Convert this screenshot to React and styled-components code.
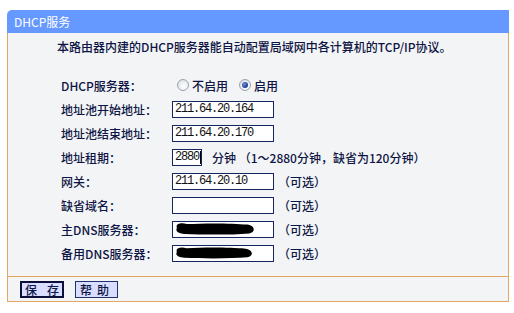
import React from "react";
import styled, { createGlobalStyle } from "styled-components";

const Global = createGlobalStyle`
  html, body { margin: 0; padding: 0; background: #ffffff; }
  body { font-family: "Noto Sans CJK SC", "Noto Sans", sans-serif; font-size: 12px; color: #0e1544; font-weight: 500; }
`;

const ORANGE = "#e3a763";

const Panel = styled.div`
  width: 502px;
  margin: 10px 0 0 7px;
`;

const Header = styled.div`
  height: 23px;
  line-height: 23px;
  background: #6699ff;
  color: #ffffff;
  font-size: 12px;
  font-weight: 400;
  padding-left: 7px;
  border-top-left-radius: 5px;
`;

const Body = styled.div`
  background: #f3f4f6;
  border: 1px solid ${ORANGE};
  border-top: none;
  padding-bottom: 11px;
`;

const Intro = styled.div`
  height: 40px;
  box-sizing: border-box;
  padding: 6px 0 0 49px;
  line-height: 16px;
  font-size: 12px;
`;

const Form = styled.div`
  display: grid;
  grid-template-columns: 111px 1fr;
  grid-auto-rows: 24px;
  padding-left: 53px;
`;

const Label = styled.div`
  display: flex;
  align-items: center;
  font-size: 12px;
`;

const Value = styled.div`
  display: flex;
  align-items: center;
  gap: ${(p) => p.$gap ?? 4}px;
  font-size: 12px;
`;

const RadioGroup = styled.div`
  display: flex;
  align-items: center;
  padding-left: 5px;
  gap: 11px;
`;

const RadioOption = styled.label`
  display: flex;
  align-items: center;
  gap: 3px;
`;

const Radio = styled.input.attrs({ type: "radio" })`
  appearance: none;
  margin: 0;
  width: 12px;
  height: 12px;
  border-radius: 50%;
  border: 1px solid #9aa3b0;
  box-sizing: border-box;
  background: radial-gradient(circle at 60% 65%, #ffffff 0%, #e4e6ea 70%, #cfd3da 100%);
  position: relative;
  &:checked::after {
    content: "";
    position: absolute;
    left: 2px;
    top: 2px;
    width: 6px;
    height: 6px;
    border-radius: 50%;
    background: radial-gradient(circle at 35% 35%, #6f8fe0 0%, #1d3a93 70%);
  }
`;

const FieldWrap = styled.div`
  position: relative;
  display: flex;
`;

const Field = styled.input`
  box-sizing: border-box;
  width: ${(p) => p.$w}px;
  height: 17px;
  margin: 0;
  padding: 0 0 0 2px;
  border: 1px solid #16255e;
  background: #ffffff;
  font-family: "Liberation Mono", "DejaVu Sans Mono", monospace;
  font-size: 12px;
  letter-spacing: -1.2px;
  color: #101010;
  outline: none;
`;

const Caret = styled.span`
  position: absolute;
  left: 28px;
  top: 2px;
  width: 1px;
  height: 13px;
  background: #000000;
`;

const Blob = styled.svg`
  position: absolute;
  left: 3px;
  top: 1px;
`;

const Hint = styled.span`
  white-space: pre;
`;

const Footer = styled.div`
  display: flex;
  align-items: flex-start;
  gap: 11px;
  height: 25px;
  box-sizing: border-box;
  padding: 4px 0 0 12px;
  background: #f3f4f6;
  border: 1px solid ${ORANGE};
  border-top: none;
`;

const Button = styled.button`
  box-sizing: border-box;
  height: 17px;
  width: ${(p) => p.$w}px;
  margin: 0;
  padding: 0 0 0 ${(p) => p.$pad}px;
  text-align: left;
  background: #d9ddff;
  border: ${(p) => (p.$focus ? "2px solid #0b0f3a" : "1px solid #23306e")};
  font-family: "Noto Sans CJK SC", sans-serif;
  font-size: 12px;
  font-weight: 500;
  line-height: 13px;
  color: #0e1544;
  letter-spacing: ${(p) => p.$ls}px;
  white-space: nowrap;
`;

const BlobShape = ({ w }) => (
  <Blob width={w} height="14" viewBox="0 0 84 14">
    <path
      d="M2 6 C0 2 6 0 12 2 C30 1 58 1 74 2.5 C82 3.5 83 10 76 11.5 C58 13 30 13 10 12 C3 11.5 0 9 2 6 Z"
      fill="#000"
    />
  </Blob>
);

export default function App() {
  return (
    <>
      <Global />
      <Panel>
        <Header>DHCP服务</Header>
        <Body>
          <Intro>本路由器内建的DHCP服务器能自动配置局域网中各计算机的TCP/IP协议。</Intro>
          <Form>
            <Label>DHCP服务器：</Label>
            <RadioGroup>
              <RadioOption>
                <Radio name="dhcp" />
                不启用
              </RadioOption>
              <RadioOption>
                <Radio name="dhcp" defaultChecked />
                启用
              </RadioOption>
            </RadioGroup>

            <Label>地址池开始地址：</Label>
            <Value>
              <Field $w={102} defaultValue="211.64.20.164" />
            </Value>

            <Label>地址池结束地址：</Label>
            <Value>
              <Field $w={102} defaultValue="211.64.20.170" />
            </Value>

            <Label>地址租期：</Label>
            <Value $gap={10}>
              <FieldWrap>
                <Field $w={30} defaultValue="2880" />
                <Caret />
              </FieldWrap>
              <Hint>分钟 （1～2880分钟，缺省为120分钟）</Hint>
            </Value>

            <Label>网关：</Label>
            <Value>
              <Field $w={102} defaultValue="211.64.20.10" />
              <Hint>（可选）</Hint>
            </Value>

            <Label>缺省域名：</Label>
            <Value>
              <Field $w={102} defaultValue="" />
              <Hint>（可选）</Hint>
            </Value>

            <Label>主DNS服务器：</Label>
            <Value>
              <FieldWrap>
                <Field $w={102} defaultValue="" />
                <BlobShape w={82} />
              </FieldWrap>
              <Hint>（可选）</Hint>
            </Value>

            <Label>备用DNS服务器：</Label>
            <Value>
              <FieldWrap>
                <Field $w={102} defaultValue="" />
                <BlobShape w={80} />
              </FieldWrap>
              <Hint>（可选）</Hint>
            </Value>
          </Form>
        </Body>
        <Footer>
          <Button $w={44} $focus $pad={3} $ls={10}>保存</Button>
          <Button $w={43} $pad={4} $ls={5}>帮助</Button>
        </Footer>
      </Panel>
    </>
  );
}
